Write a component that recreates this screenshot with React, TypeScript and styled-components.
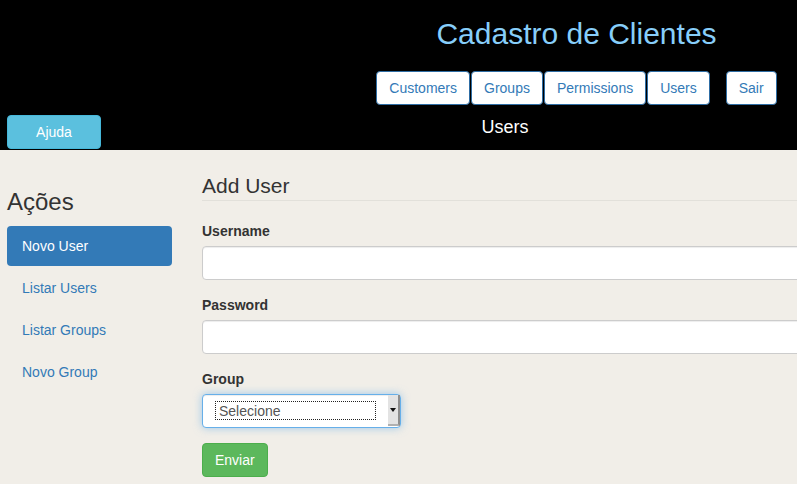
import React from "react";
import styled, { createGlobalStyle } from "styled-components";

const Global = createGlobalStyle`
  html, body { margin: 0; padding: 0; overflow: hidden; }
  body {
    font-family: "Liberation Sans", Helvetica, Arial, sans-serif;
    font-size: 14px;
    line-height: 20px;
    color: #333;
    background: #f1eee8;
  }
  * { box-sizing: border-box; }
`;

const Page = styled.div`
  width: 797px;
  min-height: 484px;
  overflow: hidden;
`;

const Header = styled.header`
  background: #000;
  height: 150px;
  display: flex;
  flex-direction: column;
`;

const TopArea = styled.div`
  margin-left: 356px;
  padding-top: 17px;
  display: flex;
  flex-direction: column;
  align-items: center;
`;

const Title = styled.h1`
  margin: 0;
  font-size: 30px;
  line-height: 33px;
  font-weight: 400;
  color: #87cefa;
`;

const NavRow = styled.nav`
  margin-top: 21px;
  display: flex;
  gap: 1px;
`;

const NavButton = styled.a<{ $gap?: boolean }>`
  display: inline-block;
  height: 34px;
  padding: 6px 12px;
  background: #fff;
  border: 1px solid #2e6da4;
  border-radius: 4px;
  color: #337ab7;
  font-size: 14px;
  line-height: 20px;
  text-decoration: none;
  margin-left: ${(p) => (p.$gap ? "15px" : "0")};
`;

const BottomRow = styled.div`
  margin-top: 10px;
  display: grid;
  grid-template-columns: 213px 1fr;
`;

const HelpButton = styled.a`
  margin-left: 7px;
  width: 94px;
  height: 34px;
  padding: 6px 12px;
  background: #5bc0de;
  border: 1px solid #46b8da;
  border-radius: 4px;
  color: #fff;
  text-align: center;
  line-height: 20px;
  text-decoration: none;
`;

const SubTitle = styled.div`
  margin-top: 2px;
  text-align: center;
  color: #fff;
  font-size: 18px;
  line-height: 20px;
`;

const Body = styled.div`
  display: grid;
  grid-template-columns: 202px 1fr;
`;

const Sidebar = styled.aside`
  padding: 38px 0 0 7px;
`;

const SideTitle = styled.h3`
  margin: 0 0 11px;
  font-size: 24px;
  line-height: 27px;
  font-weight: 400;
  color: #333;
`;

const Pills = styled.ul`
  list-style: none;
  margin: 0;
  padding: 0;
  width: 165px;
  display: flex;
  flex-direction: column;
  gap: 2px;
`;

const Pill = styled.li<{ $active?: boolean }>`
  padding: 10px 15px;
  line-height: 20px;
  border-radius: 4px;
  background: ${(p) => (p.$active ? "#337ab7" : "transparent")};
  color: ${(p) => (p.$active ? "#fff" : "#337ab7")};
`;

const Main = styled.main`
  padding-top: 26px;
  width: 700px;
`;

const Legend = styled.div`
  font-size: 21px;
  line-height: 20px;
  padding-bottom: 4px;
  border-bottom: 1px solid #e2e0da;
  color: #333;
  margin-bottom: 20px;
`;

const FormGroup = styled.div`
  margin-bottom: 15px;
`;

const Label = styled.label`
  display: block;
  font-weight: 700;
  margin-bottom: 5px;
`;

const Input = styled.input`
  display: block;
  width: 100%;
  height: 34px;
  padding: 6px 12px;
  font: inherit;
  color: #555;
  background: #fff;
  border: 1px solid #ccc;
  border-radius: 4px;
  box-shadow: inset 0 1px 1px rgba(0, 0, 0, 0.075);
  outline: none;
`;

const SelectBox = styled.div`
  width: 199px;
  height: 34px;
  display: flex;
  align-items: stretch;
  background: #fff;
  border: 1px solid #66afe9;
  border-radius: 4px;
  box-shadow: inset 0 1px 1px rgba(0, 0, 0, 0.075), 0 0 8px rgba(102, 175, 233, 0.6);
  padding: 0 0 1px 12px;
`;

const SelectValue = styled.div`
  flex: 1;
  margin: 6px 12px 6px 0;
  border: 1px dotted #222;
  padding-left: 3px;
  color: #555;
  line-height: 18px;
`;

const SelectArrow = styled.div`
  width: 12px;
  background: #e3e3e3;
  border-right: 2px solid #8e8e8e;
  border-bottom: 2px solid #b0b0b0;
  display: flex;
  align-items: center;
  justify-content: center;
  &::after {
    content: "";
    border-left: 3px solid transparent;
    border-right: 3px solid transparent;
    border-top: 4px solid #111;
  }
`;

const SubmitButton = styled.button`
  height: 34px;
  padding: 6px 12px;
  font: inherit;
  line-height: 20px;
  color: #fff;
  background: #5cb85c;
  border: 1px solid #4cae4c;
  border-radius: 4px;
`;

export default function App() {
  return (
    <Page>
      <Global />
      <Header>
        <TopArea>
          <Title>Cadastro de Clientes</Title>
          <NavRow>
            <NavButton>Customers</NavButton>
            <NavButton>Groups</NavButton>
            <NavButton>Permissions</NavButton>
            <NavButton>Users</NavButton>
            <NavButton $gap>Sair</NavButton>
          </NavRow>
        </TopArea>
        <BottomRow>
          <HelpButton>Ajuda</HelpButton>
          <SubTitle>Users</SubTitle>
        </BottomRow>
      </Header>
      <Body>
        <Sidebar>
          <SideTitle>Ações</SideTitle>
          <Pills>
            <Pill $active>Novo User</Pill>
            <Pill>Listar Users</Pill>
            <Pill>Listar Groups</Pill>
            <Pill>Novo Group</Pill>
          </Pills>
        </Sidebar>
        <Main>
          <Legend>Add User</Legend>
          <FormGroup>
            <Label>Username</Label>
            <Input type="text" />
          </FormGroup>
          <FormGroup>
            <Label>Password</Label>
            <Input type="password" />
          </FormGroup>
          <FormGroup>
            <Label>Group</Label>
            <SelectBox>
              <SelectValue>Selecione</SelectValue>
              <SelectArrow />
            </SelectBox>
          </FormGroup>
          <SubmitButton>Enviar</SubmitButton>
        </Main>
      </Body>
    </Page>
  );
}
